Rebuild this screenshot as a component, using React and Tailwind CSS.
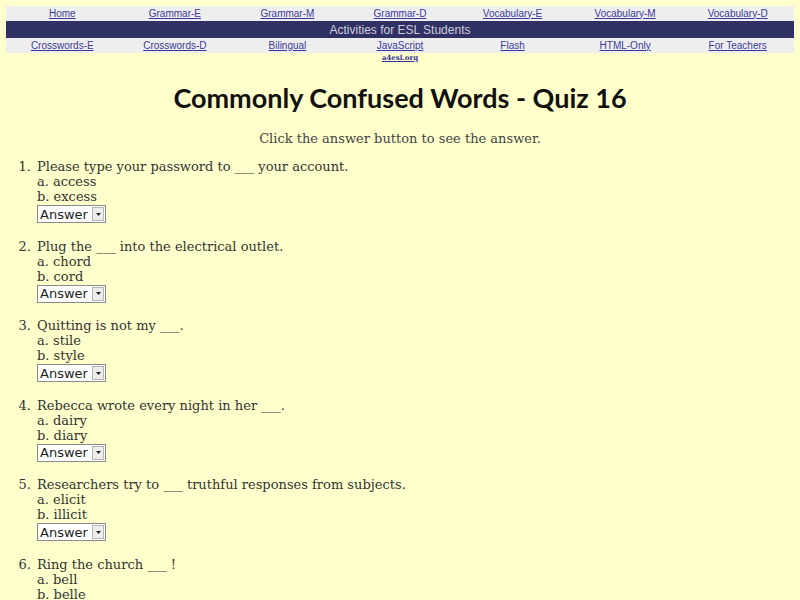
import React from "react";

const topLinks = ["Home", "Grammar-E", "Grammar-M", "Grammar-D", "Vocabulary-E", "Vocabulary-M", "Vocabulary-D"];
const bottomLinks = ["Crosswords-E", "Crosswords-D", "Bilingual", "JavaScript", "Flash", "HTML-Only", "For Teachers"];

const questions = [
  { q: "Please type your password to ___ your account.", a: "access", b: "excess" },
  { q: "Plug the ___ into the electrical outlet.", a: "chord", b: "cord" },
  { q: "Quitting is not my ___.", a: "stile", b: "style" },
  { q: "Rebecca wrote every night in her ___.", a: "dairy", b: "diary" },
  { q: "Researchers try to ___ truthful responses from subjects.", a: "elicit", b: "illicit" },
  { q: "Ring the church ___ !", a: "bell", b: "belle" },
];

function AnswerSelect() {
  return (
    <div className="relative inline-flex h-[18px] w-[69px] items-center border border-[#8a8a8a] bg-white">
      <select className="h-full w-full appearance-none bg-transparent pl-[2px] text-[13px] leading-none text-[#222] outline-none [font-family:'DejaVu_Sans',sans-serif]">
        <option>Answer</option>
      </select>
      <span className="pointer-events-none absolute right-[1px] top-[1px] flex h-[14px] w-[12px] items-center justify-center border border-[#b5b5b5] bg-[#ececec]">
        <svg width="5" height="3" viewBox="0 0 5 3"><path d="M0 0h5L2.5 3z" fill="#222" /></svg>
      </span>
    </div>
  );
}

function NavRow({ links }) {
  return (
    <div className="grid grid-cols-7 bg-[#eeeeee]">
      {links.map((l) => (
        <div key={l} className="flex h-[15px] items-center justify-center">
          <a href="#" className="text-[10px] leading-none text-[#3a3a96] underline [font-family:'Liberation_Sans',Arial,sans-serif]">
            {l}
          </a>
        </div>
      ))}
    </div>
  );
}

export default function App() {
  return (
    <div className="h-[600px] w-[800px] overflow-hidden bg-[#ffffcc] pt-[6px]">
      <div className="mx-[6px]">
        <NavRow links={topLinks} />
        <div className="flex h-[17px] items-center justify-center bg-[#2f3064] text-[12px] leading-none text-[#cfcfdc] [font-family:'Liberation_Sans',Arial,sans-serif]">
          Activities for ESL Students
        </div>
        <NavRow links={bottomLinks} />
        <div className="grid grid-cols-7">
          <div className="col-start-4 flex justify-center">
            <a href="#" className="text-[7px] font-bold leading-[9px] text-[#333399] underline [font-family:'DejaVu_Serif',serif]">
              a4esl.org
            </a>
          </div>
        </div>
      </div>

      <h1 className="mt-[20px] text-center text-[27px] font-bold leading-[32px] text-[#111] [font-family:Lato,sans-serif]">
        Commonly Confused Words - Quiz 16
      </h1>

      <p className="mt-[17px] text-center text-[13px] leading-[15px] text-[#444] [font-family:'DejaVu_Serif',serif]">
        Click the answer button to see the answer.
      </p>

      <ol className="mt-[13px] text-[13px] leading-[15px] text-[#333] [font-family:'DejaVu_Serif',serif]">
        {questions.map((item, i) => (
          <li key={i} className="mb-[15.6px] flex">
            <span className="w-[31px] shrink-0 text-right">{i + 1}.</span>
            <div className="pl-[6px]">
              <div>{item.q}</div>
              <div>a. {item.a}</div>
              <div>b. {item.b}</div>
              <div className="mt-[1px]">
                <AnswerSelect />
              </div>
            </div>
          </li>
        ))}
      </ol>
    </div>
  );
}
